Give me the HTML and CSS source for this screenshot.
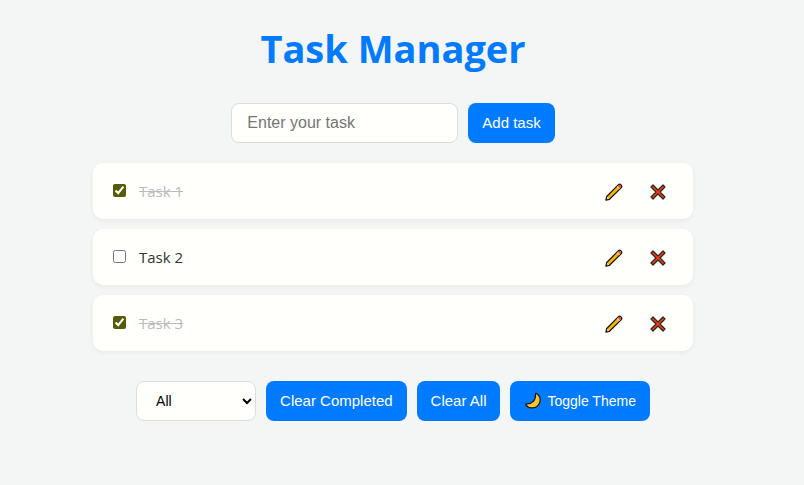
FILE: index.html
```html
<!DOCTYPE html>
<html lang="en">
<head>
<meta charset="utf-8">
<meta name="viewport" content="width=device-width, initial-scale=1">
<title>Task Manager</title>
<link rel="stylesheet" href="styles.css">
</head>
<body>
<svg class="sprite" aria-hidden="true">
  <symbol id="pencil" viewBox="0 0 18 18">
    <path d="M.9 17.1 L1.7 13.5 L13.2 1.9 Q14.6 .5 16.1 1.9 Q17.5 3.4 16.1 4.8 L4.5 16.3 Z" fill="#fcb40a" stroke="#151515" stroke-width="1.2" stroke-linejoin="round"/>
    <path d="M2.2 13.9 L4.1 15.8 L2 16.4 L1.6 16 Z" fill="#eedccb"/>
    <path d="M.9 17.1 L1.4 14.9 L3.1 16.6 Z" fill="#151515"/>
    <path d="M11.9 3.9 L14.1 6.1 L15 5.2 L12.8 3 Z" fill="#d8d8d8"/>
    <path d="M12.8 3 L13.6 2.3 Q14.7 1.3 15.7 2.3 Q16.7 3.3 15.7 4.4 L15 5.2 Z" fill="#f2483c"/>
  </symbol>
  <symbol id="cross" viewBox="0 0 18 18">
    <path d="M4 2 L9 7 L14 2 L16 4 L11 9 L16 14 L14 16 L9 11 L4 16 L2 14 L7 9 L2 4 Z" fill="#fb3d0b" stroke="#20262a" stroke-width="1.2" stroke-linejoin="round"/>
  </symbol>
  <symbol id="moon" viewBox="0 0 18 18">
    <path d="M12.4 1.5 C16.2 3.4 17.2 8 15.2 11.7 C12.5 16.8 5.4 17.5 1.8 12.8 C1.5 12.3 1.8 11.9 2.4 11.9 C8.3 12.1 12 8.1 11.5 2.2 C11.4 1.6 11.8 1.2 12.4 1.5 Z" fill="#fdc42e" stroke="#151515" stroke-width="1.2" stroke-linejoin="round"/>
  </symbol>
</svg>
<main class="container">
  <h1 class="title">Task Manager</h1>
  <form class="row">
    <input class="field task-input" type="text" placeholder="Enter your task" aria-label="Enter your task">
    <button class="btn" type="button">Add task</button>
  </form>
  <ul class="tasks">
    <li class="task done">
      <input class="check" type="checkbox" id="task1" checked>
      <label class="name" for="task1">Task 1</label>
      <button class="icon-btn" type="button" aria-label="Edit"><svg class="icon"><use href="#pencil"/></svg></button>
      <button class="icon-btn" type="button" aria-label="Delete"><svg class="icon"><use href="#cross"/></svg></button>
    </li>
    <li class="task">
      <input class="check" type="checkbox" id="task2">
      <label class="name" for="task2">Task 2</label>
      <button class="icon-btn" type="button" aria-label="Edit"><svg class="icon"><use href="#pencil"/></svg></button>
      <button class="icon-btn" type="button" aria-label="Delete"><svg class="icon"><use href="#cross"/></svg></button>
    </li>
    <li class="task done">
      <input class="check" type="checkbox" id="task3" checked>
      <label class="name" for="task3">Task 3</label>
      <button class="icon-btn" type="button" aria-label="Edit"><svg class="icon"><use href="#pencil"/></svg></button>
      <button class="icon-btn" type="button" aria-label="Delete"><svg class="icon"><use href="#cross"/></svg></button>
    </li>
  </ul>
  <div class="row">
    <select class="field filter" aria-label="Filter tasks">
      <option>All</option>
      <option>Completed</option>
      <option>Pending</option>
    </select>
    <button class="btn" type="button">Clear Completed</button>
    <button class="btn" type="button">Clear All</button>
    <button class="btn theme" type="button"><svg class="icon"><use href="#moon"/></svg>Toggle Theme</button>
  </div>
</main>
</body>
</html>
```
FILE: styles.css
```css
* {
  box-sizing: border-box;
}

body {
  margin: 0;
  padding: 20px 18px 20px 0;
  background: #f4f6f6;
  color: #333;
  font-family: "Segoe UI", "Open Sans", sans-serif;
}

.sprite {
  display: none;
}

.container {
  max-width: 600px;
  margin: 0 auto;
}

.title {
  margin: 0 0 27px;
  color: #007bff;
  font-size: 38px;
  line-height: 56px;
  text-align: center;
}

.row {
  display: flex;
  justify-content: center;
  gap: 10px;
}

.field {
  height: 40px;
  border: 1px solid #ddd;
  border-radius: 8px;
  background: #fffffc;
  font-family: "Liberation Sans", Arial, sans-serif;
}

.task-input {
  width: 227px;
  padding: 0 15px;
  font-size: 16px;
}

.filter {
  width: 120px;
  padding: 0 15px;
  color: #000;
  font-size: 14px;
}

.btn {
  height: 40px;
  padding: 0 14px 2px;
  border: 0;
  border-radius: 8px;
  background: #007bff;
  color: #fff;
  font-family: "Liberation Sans", Arial, sans-serif;
  font-size: 15px;
  white-space: nowrap;
}

.theme {
  display: flex;
  align-items: center;
  gap: 5px;
  padding-bottom: 0;
  font-size: 14px;
}

.tasks {
  display: grid;
  gap: 10px;
  margin: 20px 0 30px;
  padding: 0;
  list-style: none;
}

.task {
  display: flex;
  align-items: center;
  height: 56px;
  padding: 0 16px 0 20px;
  border-radius: 10px;
  background: #fffffc;
  box-shadow: 0 2px 5px rgba(0, 0, 0, 0.05);
}

.check {
  width: 13px;
  height: 13px;
  margin: 0 13px 2px 0;
  accent-color: #555b08;
}

.name {
  flex: 1;
  font-size: 15px;
}

.done .name {
  color: #bbb;
  text-decoration: line-through;
}

.icon-btn {
  display: grid;
  place-items: center;
  width: 38px;
  height: 38px;
  padding: 2px 0 0;
  border: 0;
  background: none;
}

.icon-btn + .icon-btn {
  margin-left: 6px;
}

.icon {
  width: 18px;
  height: 18px;
}
```
